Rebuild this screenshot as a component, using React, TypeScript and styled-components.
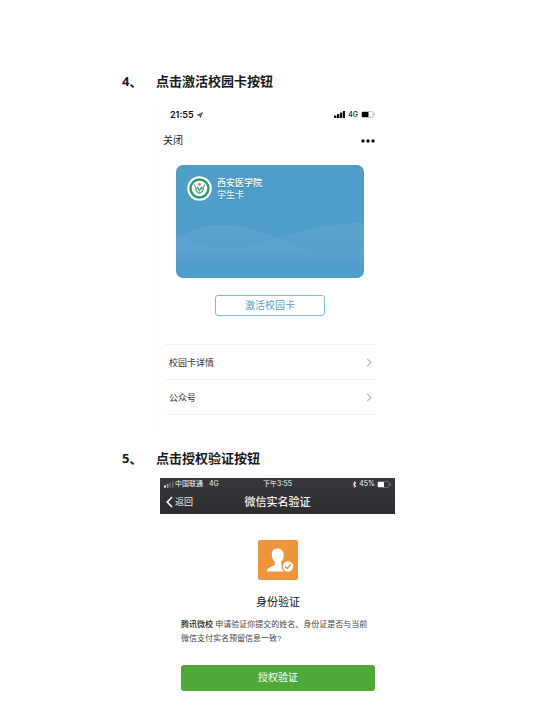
import React from "react";
import styled, { createGlobalStyle } from "styled-components";

const GlobalStyle = createGlobalStyle`
  * { box-sizing: border-box; }
  html { background: #fff; }
  body {
    margin: 0;
    color: #222;
    font-family: "Liberation Sans", "Noto Sans CJK SC", sans-serif;
  }
  h1, h2, h3, p, ol, ul { margin: 0; padding: 0; }
  svg { display: block; flex: none; }
`;

const Page = styled.main`
  padding: 71px 159px 24px 122px;
`;

const StepTitle = styled.h2`
  display: grid;
  grid-template-columns: 34px 1fr;
  font-family: "Open Sans", "Noto Sans CJK SC", sans-serif;
  font-size: 13px;
  line-height: 20px;
  font-weight: 700;
  color: #1a1a1a;
  white-space: nowrap;
`;

const CardScreen = styled.section`
  margin: 11px 10px 0 35px;
  padding: 0 10px 24px 7px;
  border-left: 1px solid #fafafa;
`;

const StatusBar = styled.div`
  display: flex;
  align-items: center;
  justify-content: space-between;
  height: 25px;
  padding-left: 5px;
  font-family: Inter, sans-serif;
`;

const Clock = styled.span`
  display: flex;
  align-items: center;
  gap: 3px;
  font-size: 9px;
  font-weight: 600;
  color: #111;
`;

const Signals = styled.span`
  display: flex;
  align-items: center;
  gap: 3px;
  font-size: 7px;
  font-weight: 500;
`;

const NavRow = styled.div`
  display: flex;
  align-items: center;
  justify-content: space-between;
  height: 28px;
  margin-left: -2px;
`;

const PlainButton = styled.button`
  display: flex;
  align-items: center;
  padding: 0;
  border: 0;
  background: none;
  font: inherit;
  font-size: 10px;
  line-height: 14px;
  color: #222;
`;

const CampusCard = styled.article`
  display: flex;
  flex-direction: column;
  justify-content: space-between;
  min-height: 113px;
  margin: 10px 11px 0;
  border-radius: 7px;
  overflow: hidden;
  background: #4f9dc9;
  color: #fff;
`;

const School = styled.div`
  display: flex;
  align-items: center;
  gap: 5px;
  padding: 11px 0 0 11px;
`;

const SchoolText = styled.div`
  font-size: 9px;
  line-height: 12px;
  text-shadow: 0 1px 1px rgba(30, 80, 120, 0.4);
`;

const SchoolName = styled.h3`
  font-size: 9px;
  line-height: 12px;
  font-weight: 500;
`;

const Wave = styled.svg`
  width: 100%;
  height: 56px;
`;

const ActivateButton = styled.button`
  display: block;
  width: 110px;
  height: 21px;
  margin: 17px auto 0;
  padding: 0;
  border: 1px solid #87bad1;
  border-radius: 3px;
  background: #fff;
  font: inherit;
  font-size: 10px;
  line-height: 19px;
  color: #5a9fc0;
`;

const LinkList = styled.ul`
  margin-top: 28px;
  border-top: 1px solid #f2f2f2;
  list-style: none;
`;

const LinkRow = styled.a`
  display: flex;
  align-items: center;
  justify-content: space-between;
  height: 35px;
  padding: 0 3px 0 4px;
  border-bottom: 1px solid #f2f2f2;
  font-size: 9px;
  color: #333;
  text-decoration: none;
`;

const SecondStep = styled.div`
  margin-top: 9px;
`;

const VerifyScreen = styled.section`
  margin: 10px 0 0 38px;
`;

const DarkHeader = styled.header`
  background: linear-gradient(#37373c, #2d2d31);
  color: #f4f4f4;
`;

const ThreeColumns = styled.div`
  display: grid;
  grid-template-columns: 1fr auto 1fr;
  align-items: center;
  padding: 0 4px;
`;

const DarkStatus = styled(ThreeColumns)`
  height: 12px;
  font-family: Inter, "Noto Sans CJK SC", sans-serif;
  font-size: 7px;
  line-height: 12px;
`;

const DarkNav = styled(ThreeColumns)`
  height: 24px;
  padding: 0 6px;
`;

const Cluster = styled.span<{ $end?: boolean }>`
  display: flex;
  align-items: center;
  justify-content: ${(p) => (p.$end ? "flex-end" : "flex-start")};
  gap: ${(p) => (p.$end ? 2 : 1)}px;
`;

const Network = styled.span`
  margin-left: 5px;
`;

const BackButton = styled(PlainButton)`
  gap: 2px;
  font-size: 9px;
  color: #eee;
`;

const NavTitle = styled.h3`
  font-size: 11px;
  line-height: 16px;
  font-weight: 500;
`;

const VerifyBody = styled.div`
  display: flex;
  flex-direction: column;
  padding: 26px 20px 0 21px;
`;

const Portrait = styled.svg`
  align-self: center;
`;

const VerifyTitle = styled.h3`
  margin-top: 14px;
  text-align: center;
  font-size: 11px;
  line-height: 16px;
  font-weight: 400;
  color: #111;
`;

const Description = styled.p`
  margin: 8px 0 0;
  font-size: 8px;
  line-height: 14px;
  color: #444;
`;

const Requester = styled.strong`
  font-weight: 500;
  color: #222;
`;

const AuthorizeButton = styled.button`
  height: 26px;
  margin-top: 19px;
  padding: 0;
  border: 0;
  border-radius: 3px;
  background: #50a838;
  font: inherit;
  font-size: 10px;
  line-height: 24px;
  color: #fff;
`;

const links = ["校园卡详情", "公众号"];

function SignalBars({ dim = false }: { dim?: boolean }) {
  return (
    <svg width={dim ? 10 : 11} height="7" viewBox="0 0 11 7" fill={dim ? "#eee" : "#111"}>
      <rect x="0" y="4.5" width={dim ? 2 : 2.4} height="2.5" />
      <rect x="3" y="3" width={dim ? 2 : 2.4} height="4" opacity={dim ? 0.6 : 1} />
      <rect x="6" y="1.5" width={dim ? 1.4 : 2.4} height="5.5" opacity={dim ? 0.35 : 1} />
      <rect x="9" y="0" width={dim ? 1.4 : 2} height="7" opacity={dim ? 0.35 : 1} />
    </svg>
  );
}

function Battery({ color, fill, outline }: { color: string; fill: number; outline: string }) {
  return (
    <svg width="14" height="7" viewBox="0 0 14 7">
      <rect x=".5" y=".5" width="11.5" height="6" rx="1.3" fill="none" stroke={outline} strokeWidth=".7" />
      <rect x="1" y="1" width={fill} height="5" rx=".5" fill={color} />
      <path d="M13.2 2.3v2.4" stroke={outline} strokeWidth=".9" />
    </svg>
  );
}

function Emblem() {
  return (
    <svg width="25" height="25" viewBox="0 0 25 25">
      <circle cx="12.5" cy="12.5" r="12.2" fill="#fff" />
      <circle cx="12.5" cy="12.5" r="9" fill="#fff" stroke="#2d9869" strokeWidth="2.4" />
      <path d="M7.5 8.5c.3 2.600 1.800 4 4 5M17.500 8.500c-.3 2.600-1.800 4-4 5M8.200 12.500c.8 2.800 2.300 3.800 4.300 4.800 2-1 3.500-2 4.300-4.800M10.500 10.500l2 4.500 2-4.500" fill="none" stroke="#4aa77d" strokeWidth="1.100" />
      <circle cx="12.5" cy="8.300" r="1.300" fill="#dc665c" />
    </svg>
  );
}

function App() {
  return (
    <>
      <GlobalStyle />
      <Page lang="zh-CN">
        <StepTitle><span>4、</span><span>点击激活校园卡按钮</span></StepTitle>
        <CardScreen>
          <StatusBar>
            <Clock>
              21:55
              <svg width="6" height="6" viewBox="0 0 6 6">
                <path d="M.5 3.1 5.4.6 3.4 5.5 3 3.2z" fill="#999" stroke="#222" strokeWidth=".7" />
              </svg>
            </Clock>
            <Signals>
              <SignalBars />4G<Battery color="#000" fill={6.5} outline="#aaa" />
            </Signals>
          </StatusBar>
          <NavRow>
            <PlainButton type="button">关闭</PlainButton>
            <PlainButton type="button" aria-label="更多">
              <svg width="14" height="4" viewBox="0 0 14 4" fill="#111">
                <circle cx="2" cy="2" r="1.7" />
                <circle cx="7" cy="2" r="1.7" />
                <circle cx="12" cy="2" r="1.7" />
              </svg>
            </PlainButton>
          </NavRow>
          <CampusCard>
            <School>
              <Emblem />
              <SchoolText>
                <SchoolName>西安医学院</SchoolName>
                <p>学生卡</p>
              </SchoolText>
            </School>
            <Wave viewBox="0 0 188 56" preserveAspectRatio="none" aria-hidden="true">
              <defs>
                <linearGradient id="crest" x1="0" y1="0" x2="0" y2="1">
                  <stop offset="0" stopColor="#fff" stopOpacity=".07" />
                  <stop offset=".8" stopColor="#fff" stopOpacity="0" />
                </linearGradient>
              </defs>
              <path d="M0 19C13 9 24 3 47 3C76 3 88 13 108 18C127 27 140 29 160 29C174 29 182 27 188 26V56H0Z" fill="url(#crest)" />
              <path d="M0 13C20 22 34 25 54 25C78 25 94 19 112 13C137 5 156 1 188 1V56H0Z" fill="url(#crest)" />
            </Wave>
          </CampusCard>
          <ActivateButton type="button">激活校园卡</ActivateButton>
          <LinkList>
            {links.map((label) => (
              <li key={label}>
                <LinkRow href="#">
                  {label}
                  <svg width="6" height="9" viewBox="0 0 6 9" fill="none" stroke="#bbb" strokeWidth="1.1">
                    <path d="m1 .7 4 3.8-4 3.8" />
                  </svg>
                </LinkRow>
              </li>
            ))}
          </LinkList>
        </CardScreen>
        <SecondStep>
          <StepTitle><span>5、</span><span>点击授权验证按钮</span></StepTitle>
          <VerifyScreen>
            <DarkHeader>
              <DarkStatus>
                <Cluster>
                  <SignalBars dim />中国联通<Network>4G</Network>
                </Cluster>
                <span>下午3:55</span>
                <Cluster $end>
                  <svg width="5" height="7" viewBox="0 0 5 7" fill="none" stroke="#eee" strokeWidth=".8">
                    <path d="M.7 2 4.1 5 2.500 6.500v-6L4.100 2 .7 5" />
                  </svg>
                  45%
                  <Battery color="#fff" fill={6} outline="#888" />
                </Cluster>
              </DarkStatus>
              <DarkNav>
                <BackButton type="button">
                  <svg width="7" height="12" viewBox="0 0 7 12" fill="none" stroke="#fff" strokeWidth="1.6">
                    <path d="M6 1 1.3 6 6 11" />
                  </svg>
                  返回
                </BackButton>
                <NavTitle>微信实名验证</NavTitle>
              </DarkNav>
            </DarkHeader>
            <VerifyBody>
              <Portrait width="40" height="40" viewBox="0 0 40 40" aria-hidden="true">
                <rect width="40" height="40" rx="2" fill="#ee943b" />
                <path d="M19.5 8.5c-4 0-6 2.7-5.7 6.500.2 3 1.200 5.200 3 6.800v2.700c-1 2.200-7.600 2.200-8.100 7h23.500c-.5-4.800-8-4.800-9-7v-2.700c1.800-1.600 2.500-3.800 2.500-6.800 0-3.800-2.200-6.500-6.200-6.500z" fill="#fff" />
                <circle cx="30" cy="26.5" r="5.8" fill="#fff" stroke="#ee943b" strokeWidth="1.3" />
                <path d="m27.2 26.5 2 2 3.800-4" fill="none" stroke="#ee943b" strokeWidth="1.3" />
              </Portrait>
              <VerifyTitle>身份验证</VerifyTitle>
              <Description>
                <Requester>腾讯微校</Requester>
                <span> 申请验证你提交的姓名、身份证是否与当前微信支付实名预留信息一致?</span>
              </Description>
              <AuthorizeButton type="button">授权验证</AuthorizeButton>
            </VerifyBody>
          </VerifyScreen>
        </SecondStep>
      </Page>
    </>
  );
}

export default App;
